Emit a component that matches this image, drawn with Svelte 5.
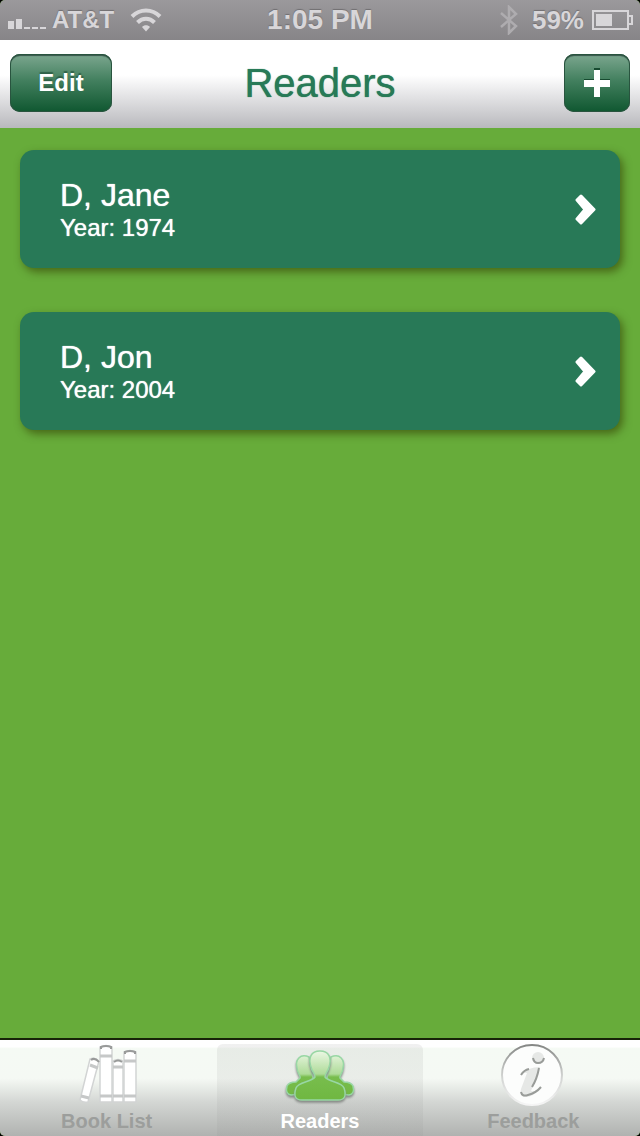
<script>
  let readers = $state([
    { name: 'D, Jane', year: 1974 },
    { name: 'D, Jon', year: 2004 }
  ]);

  const battery = 59;
  const tabs = [
    { id: 'books', label: 'Book List' },
    { id: 'readers', label: 'Readers' },
    { id: 'feedback', label: 'Feedback' }
  ];

  let active = $state('readers');
</script>

<div class="phone">
  <header class="status">
    <div class="carrier">
      <svg width="40" height="20" viewBox="0 0 40 20" aria-hidden="true">
        <path d="M2 11h6v8H2zM10 9h6v10h-6zM18 17h6v2h-6zM26 17h6v2h-6zM34 17h6v2h-6z" />
      </svg>
      <span class="network">AT&amp;T</span>
      <svg class="wifi" width="32" height="24" viewBox="0 0 32 24" aria-hidden="true">
        <g fill="none" stroke="currentColor" stroke-width="4">
          <path d="M2 8.500C10 .5 22 .5 30 8.500" />
          <path d="M7.500 14.500C12.500 9.500 19.500 9.500 24.500 14.500" />
        </g>
        <path d="M12 19C14 16.500 18 16.500 20 19L16 23.500z" />
      </svg>
    </div>
    <span class="clock">1:05 PM</span>
    <div class="power">
      <svg class="bluetooth" width="18" height="30" viewBox="0 0 18 30" aria-hidden="true">
        <path d="M1 8l15 13-7 7V2l7 7L1 22" fill="none" stroke="currentColor" stroke-width="2.500" />
      </svg>
      <span class="percent">{battery}%</span>
      <svg class="battery" width="42" height="20" viewBox="0 0 42 20" aria-hidden="true">
        <path d="M1 1h35v5h4v8h-4v5H1zM36 6v8" fill="none" stroke="currentColor" stroke-width="2" />
        <rect x="4" y="4" width="16" height="12" />
      </svg>
    </div>
  </header>

  <nav class="navbar" aria-label="Readers toolbar">
    <button class="nav-btn edit">Edit</button>
    <h1>Readers</h1>
    <button class="nav-btn add" aria-label="Add reader">
      <svg width="28" height="30" viewBox="0 0 28 30" aria-hidden="true">
        <path d="M11 0h6v11h10v6H17v11h-6V17H1v-6h10z" fill="#174a30" />
        <path d="M11 2h6v10h10v7H17v10h-6V19H1v-7h10z" fill="#fff" />
      </svg>
    </button>
  </nav>

  <main>
    {#each readers as reader}
      <button class="card">
        <span class="info">
          <span class="name">{reader.name}</span>
          <span class="year">Year: {reader.year}</span>
        </span>
        <svg width="22" height="32" viewBox="0 0 22 32" aria-hidden="true">
          <path
            d="M3 7L7 3 20 16.500 7 30 3 26 11 16.500z"
            fill="#fff"
            stroke="#fff"
            stroke-width="3"
            stroke-linejoin="round"
          />
        </svg>
      </button>
    {/each}
  </main>

  <nav class="tabbar" aria-label="Sections">
    {#each tabs as tab}
      <button class="tab" class:active={active === tab.id} onclick={() => (active = tab.id)}>
        {#if tab.id === 'books'}
          <svg width="72" height="64" viewBox="0 0 72 64" aria-hidden="true">
            <g fill="#fff" stroke="#d2d4d4" stroke-width="1.500">
              <path d="M19 15Q24 13 28 17L17 58Q12 59 9 56z" />
              <path d="M29 3Q35 0 41 3V58H29z" />
              <path d="M42 17Q47 14 52 17V58H42z" />
              <path d="M53 8Q59 5 65 8V58H53z" />
            </g>
            <path
              d="M19 21l8 3M10 52l8 2M29 12h12M29 52h12M42 23h10M42 52h10M53 17h12M53 52h12"
              stroke="#c6c8c8"
              stroke-width="3"
            />
            <path
              d="M20 16Q24 13 28 18M30 5V3Q35 1 40 3v2M43 18Q47 15 51 18M54 10V8Q59 6 64 8v2"
              fill="none"
              stroke="#989a99"
              stroke-width="2"
            />
          </svg>
        {:else if tab.id === 'readers'}
          <svg width="72" height="64" viewBox="0 0 72 64" aria-hidden="true">
            <defs>
              <linearGradient id="people" x1="0" y1="7" x2="0" y2="57" gradientUnits="userSpaceOnUse">
                <stop offset="0" stop-color="#ebf7e4" />
                <stop offset=".46" stop-color="#aedb98" />
                <stop offset=".52" stop-color="#78bd4d" />
                <stop offset="1" stop-color="#6fb741" />
              </linearGradient>
            </defs>
            <g class="people" fill="url(#people)" stroke="#98d7a4" stroke-width="1.500">
              <path d="M25 13C16 9 11 16 13 24C13 29 17 32 16 34L12 38Q5 38 3 42Q1 50 7 51L18 50L29 34z" />
              <path d="M47 13C56 9 61 16 59 24C59 29 55 32 56 34L60 38Q67 38 69 42Q71 50 65 51L54 50L43 34z" />
              <path
                class="front"
                d="M36 7C27 7 24 14 27 23C28 28 31 29 31 33C28 38 14 38 12 44Q8 56 18 56H54Q64 56 60 44C58 38 44 38 41 33C41 29 44 28 45 23C48 14 45 7 36 7z"
              />
            </g>
          </svg>
        {:else}
          <svg width="72" height="64" viewBox="0 0 72 64" aria-hidden="true">
            <defs>
              <linearGradient id="ring" x1="0" y1="0" x2="0" y2="1">
                <stop offset="0" stop-color="#858785" />
                <stop offset=".5" stop-color="#cfd1cf" />
                <stop offset="1" stop-color="#f5f5f5" />
              </linearGradient>
            </defs>
            <circle cx="35" cy="31" r="30" fill="#fcfdfc" stroke="url(#ring)" stroke-width="2" />
            <g fill="#e6e8e6">
              <circle cx="41" cy="14" r="6" />
              <path d="M23 31Q31 23 43 23L34 47Q39 48 44 43Q36 54 27 53Q22 51 24 45L30 29Q26 28 23 31z" />
            </g>
            <path
              d="M36 14Q37 19 41 19Q46 19 47 14M24 31Q27 26 32 25M42 24Q40 35 35 43M24 48Q25 53 31 51Q39 49 44 43"
              fill="none"
              stroke="#999c99"
              stroke-width="2"
            />
          </svg>
        {/if}
        <span>{tab.label}</span>
      </button>
    {/each}
  </nav>
</div>

<style>
  :global(body) {
    background: #000;
  }

  .phone {
    display: flex;
    flex-direction: column;
    min-height: 100vh;
    overflow: hidden;
    border-radius: 5px;
    background: #67ac3a;
    font-family: 'Liberation Sans', Arial, sans-serif;
  }

  button {
    border: 0;
    padding: 0;
    font: inherit;
    cursor: pointer;
  }

  svg {
    display: block;
    flex: none;
    fill: currentColor;
  }

  .status {
    display: grid;
    grid-template-columns: 1fr auto 1fr;
    align-items: center;
    height: 40px;
    padding: 0 6px;
    background: linear-gradient(#9b999c, #878588);
    color: #d8d6d9;
    font-size: 28px;
    font-weight: 700;
    text-shadow: 0 -1px 1px #706e71;
  }

  .carrier,
  .power {
    display: flex;
    align-items: center;
  }

  .network {
    margin-left: 6px;
    font-size: 24px;
  }

  .wifi {
    margin-left: 16px;
  }

  .power {
    justify-content: flex-end;
  }

  .bluetooth {
    margin-right: 14px;
    color: #aeacaf;
  }

  .percent {
    font-size: 26px;
  }

  .battery {
    margin-left: 8px;
  }

  .navbar {
    display: grid;
    grid-template-columns: 1fr auto 1fr;
    align-items: center;
    height: 88px;
    box-sizing: border-box;
    padding: 0 10px 2px;
    background: linear-gradient(#fff 40%, #e2e2e4 65%, #b9b9bd);
  }

  h1 {
    margin: 0;
    color: #287a57;
    font-size: 40px;
    font-weight: 400;
    line-height: 48px;
    text-shadow: 0 0 1px #287a57;
  }

  .nav-btn {
    display: flex;
    align-items: center;
    justify-content: center;
    height: 58px;
    border-radius: 10px;
    background: linear-gradient(#7da790, #43805f 45%, #0f5730);
    box-shadow: inset 0 0 0 1px #29543f, inset 0 2px 1px #36564a;
    color: #fff;
    font-size: 24px;
    font-weight: 700;
    text-shadow: 0 -2px 1px #2f6148;
  }

  .edit {
    width: 102px;
  }

  .add {
    width: 66px;
    justify-self: end;
  }

  main {
    flex: 1;
    display: flex;
    flex-direction: column;
    gap: 44px;
    padding: 22px 20px;
  }

  .card {
    display: flex;
    align-items: center;
    justify-content: space-between;
    height: 118px;
    padding: 0 24px 0 40px;
    border-radius: 14px;
    background: #287957;
    box-shadow: 3px 4px 8px rgba(50, 60, 0, 0.6);
    color: #fff;
    text-align: left;
    text-shadow: 0 0 1px #fff;
  }

  .info {
    display: flex;
    flex-direction: column;
  }

  .name {
    font-size: 32px;
    line-height: 38px;
  }

  .year {
    font-size: 24px;
    line-height: 28px;
  }

  .tabbar {
    display: grid;
    grid-template-columns: repeat(3, 1fr);
    height: 98px;
    box-sizing: border-box;
    border-top: 2px solid #182408;
    padding-top: 4px;
    background: linear-gradient(#fff 7%, #f5faf4 9%, #f5f9f4 40%, #d3d6d3 65%, #b0b2b0);
  }

  .tab {
    display: flex;
    flex-direction: column;
    align-items: center;
    margin: 0 4px;
    border-radius: 6px 6px 0 0;
    background: none;
    color: #9c9e9c;
    font-size: 20px;
    font-weight: 700;
    line-height: 24px;
  }

  .tab span {
    margin-top: 1px;
  }

  .tab.active {
    background: linear-gradient(rgba(90, 90, 90, 0.09), rgba(90, 90, 90, 0.05));
    color: #fff;
  }

  .people path {
    filter: drop-shadow(0 2px 1px #858985);
  }
</style>
